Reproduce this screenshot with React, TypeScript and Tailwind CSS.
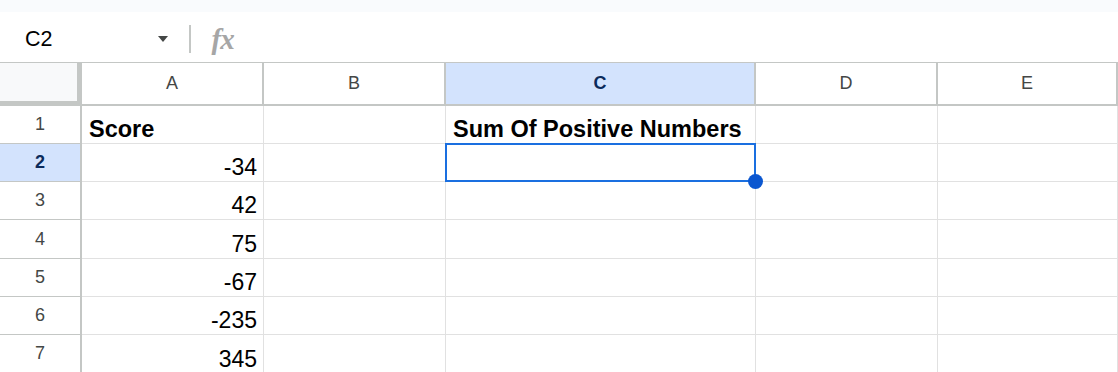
import type { ReactNode } from 'react'

const COLUMNS = ['A', 'B', 'C', 'D', 'E']
const SELECTED_COL = 'C'
const SELECTED_ROW = 2

type CellValue = { text: string; bold?: boolean; align?: 'left' | 'right' }

const DATA: Record<string, CellValue> = {
  A1: { text: 'Score', bold: true },
  C1: { text: 'Sum Of Positive Numbers', bold: true },
  A2: { text: '-34', align: 'right' },
  A3: { text: '42', align: 'right' },
  A4: { text: '75', align: 'right' },
  A5: { text: '-67', align: 'right' },
  A6: { text: '-235', align: 'right' },
  A7: { text: '345', align: 'right' },
}

const ROWS = [1, 2, 3, 4, 5, 6, 7]

function FormulaBar() {
  return (
    <div className="flex h-[50px] items-center bg-white pt-[4px]">
      <div className="flex w-[180px] items-center pl-[25px] pr-[12px]">
        <span className="text-[21.5px] text-black">C2</span>
        <span className="ml-auto h-0 w-0 border-x-[5px] border-t-[6px] border-x-transparent border-t-[#444746]" />
      </div>
      <div className="mx-[9px] h-[28px] w-[1.5px] bg-[#c4c7c5]" />
      <span className="ml-[12px] font-['Liberation_Serif',serif] text-[29px] font-bold italic leading-none tracking-[-1px] text-[#a6a6a6]">
        fx
      </span>
    </div>
  )
}

function HeaderCell({ children, selected }: { children: ReactNode; selected?: boolean }) {
  return (
    <div
      className={
        selected
          ? 'flex items-center justify-center border-b-2 border-r-2 border-[#c4c7c5] bg-[#d3e3fd] text-[18px] font-bold text-[#0b2a5b]'
          : 'flex items-center justify-center border-b-2 border-r-2 border-[#c4c7c5] bg-white text-[18px] text-[#444746]'
      }
    >
      {children}
    </div>
  )
}

function RowHeader({ row }: { row: number }) {
  const selected = row === SELECTED_ROW
  return (
    <div
      className={
        selected
          ? 'flex items-center justify-center border-b border-r-2 border-[#c4c7c5] bg-[#d3e3fd] text-[18px] font-bold text-[#0b2a5b]'
          : 'flex items-center justify-center border-b border-r-2 border-[#c4c7c5] bg-white text-[18px] text-[#444746]'
      }
    >
      {row}
    </div>
  )
}

function Cell({ id }: { id: string }) {
  const value = DATA[id]
  const active = id === `${SELECTED_COL}${SELECTED_ROW}`
  return (
    <div
      className={
        value?.align === 'right'
          ? 'relative flex items-end justify-end border-b border-r border-[#e1e1e1] px-[6px] pb-[1px]'
          : 'relative flex items-end justify-start border-b border-r border-[#e1e1e1] px-[7px] pb-[1px]'
      }
    >
      {value && (
        <span
          className={
            value.bold
              ? 'text-[23.5px] font-bold leading-[26px] text-black'
              : 'text-[23px] leading-[26px] text-black'
          }
        >
          {value.text}
        </span>
      )}
      {active && (
        <>
          <div className="pointer-events-none absolute -left-px -top-px -bottom-px -right-px border-2 border-[#1a6fe0]" />
          <div className="absolute -bottom-[8px] -right-[8px] z-10 size-[15px] rounded-full bg-[#0b57d0]" />
        </>
      )}
    </div>
  )
}

export default function App() {
  return (
    <div className="h-[372px] w-[1118px] overflow-hidden bg-white font-['Liberation_Sans',Arial,sans-serif]">
      <div className="h-[12px] bg-[#f9fbfd]" />
      <FormulaBar />
      <div className="grid grid-cols-[82px_182px_182px_310px_182px_1fr] grid-rows-[42.5px_repeat(7,38.3px)] border-t border-[#c4c7c5]">
        <div className="border-b-[5px] border-r-[5px] border-[#c4c7c5] bg-[#f8f9fa]" />
        {COLUMNS.map((col) => (
          <HeaderCell key={col} selected={col === SELECTED_COL}>
            {col}
          </HeaderCell>
        ))}
        {ROWS.map((row) => (
          <RowCells key={row} row={row} />
        ))}
      </div>
    </div>
  )
}

function RowCells({ row }: { row: number }) {
  return (
    <>
      <RowHeader row={row} />
      {COLUMNS.map((col) => (
        <Cell key={col} id={`${col}${row}`} />
      ))}
    </>
  )
}
